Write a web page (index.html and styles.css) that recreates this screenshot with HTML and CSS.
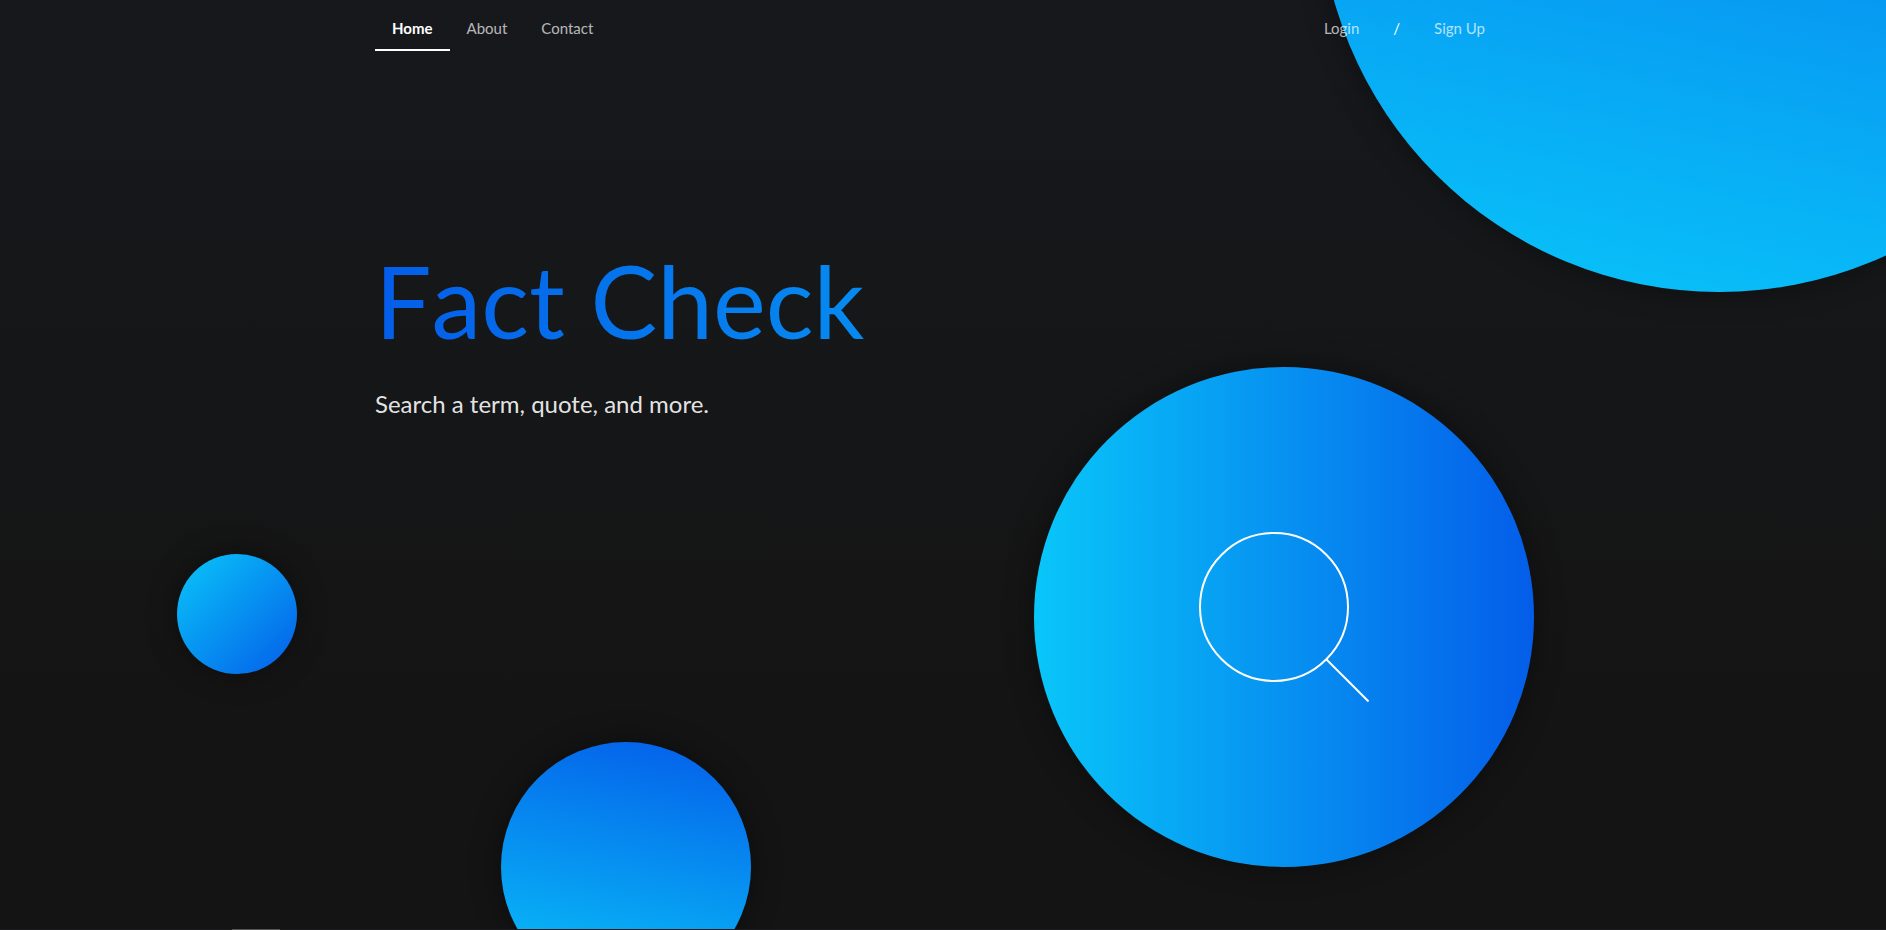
FILE: index.html
```html
<!DOCTYPE html>
<html lang="en">
<head>
  <meta charset="utf-8">
  <meta name="viewport" content="width=device-width, initial-scale=1">
  <title>Fact Check</title>
  <link rel="stylesheet" href="styles.css">
</head>
<body>
  <main class="hero">
    <div class="orb orb-corner"></div>
    <div class="orb orb-small"></div>
    <div class="orb orb-bottom"></div>
    <div class="container">
      <nav class="menu" aria-label="Main">
        <a class="item active" href="#home">Home</a>
        <a class="item" href="#about">About</a>
        <a class="item" href="#contact">Contact</a>
        <div class="menu-right">
          <a class="item" href="#login">Login</a>
          <span class="item divider">/</span>
          <a class="item" href="#signup">Sign Up</a>
        </div>
      </nav>
      <header class="intro">
        <h1 class="title">Fact Check</h1>
        <p class="tagline">Search a term, quote, and more.</p>
      </header>
    </div>
    <button class="orb orb-search" type="button" aria-label="Search">
      <svg class="search-icon" viewBox="0 0 170 170" aria-hidden="true">
        <circle cx="75" cy="75" r="74"/>
        <path d="M127.5 127.5L169.5 169.5"/>
      </svg>
    </button>
  </main>
  <footer class="next"><div class="next-mark"></div></footer>
</body>
</html>
```
FILE: styles.css
```css
* {
  box-sizing: border-box;
}

body {
  margin: 0;
  height: 100vh;
  overflow: hidden;
  display: flex;
  flex-direction: column;
  background: #1b1a1c;
  color: #ffffff;
  font-family: Lato, "Liberation Sans", sans-serif;
}

.hero {
  position: relative;
  flex: 1;
  overflow: hidden;
  padding-right: 9px;
  background: linear-gradient(#17181c, #161719 30%, #141414 80%);
}

.container {
  position: relative;
  max-width: 1127px;
  margin: 0 auto;
}

.menu {
  display: flex;
  align-items: flex-end;
}

.menu-right {
  display: flex;
  margin-left: auto;
}

.item {
  padding: 20px 17px 13px;
  border-bottom: 2px solid transparent;
  color: rgba(255, 255, 255, 0.7);
  font-size: 15px;
  line-height: 16px;
  text-decoration: none;
}

.item.active {
  border-color: #ffffff;
  color: #ffffff;
  font-weight: 700;
}

.item.divider {
  color: #ffffff;
}

.intro {
  padding-top: 189px;
}

.title {
  margin: 0;
  background: linear-gradient(90deg, #045de9, #09c6f9);
  background-clip: text;
  -webkit-background-clip: text;
  color: transparent;
  font-size: 100px;
  font-weight: 400;
  font-kerning: none;
  line-height: 120px;
}

.tagline {
  margin: 28px 0 0;
  color: rgba(255, 255, 255, 0.9);
  font-size: 24px;
  line-height: 32px;
}

/* Decorative circles floating behind the content */
.orb {
  position: absolute;
  border: 0;
  border-radius: 50%;
  box-shadow: 0 0 30px rgba(0, 0, 0, 0.4);
}

.orb-corner {
  top: -508px;
  right: -233px;
  width: 800px;
  height: 800px;
  background: linear-gradient(192deg, #045de9, #09c6f9);
}

.orb-small {
  top: 554px;
  left: 177px;
  width: 120px;
  height: 120px;
  background: linear-gradient(135deg, #09c6f9, #045de9);
}

.orb-bottom {
  top: 742px;
  left: 501px;
  width: 250px;
  height: 250px;
  background: linear-gradient(192deg, #045de9, #09c6f9);
}

.orb-search {
  top: 367px;
  right: 352px;
  width: 500px;
  height: 500px;
  padding: 0;
  display: grid;
  place-items: center;
  background: linear-gradient(90deg, #09c6f9, #045de9);
  cursor: pointer;
}

.search-icon {
  width: 170px;
  height: 170px;
  fill: none;
  stroke: #ffffff;
  stroke-width: 2;
}

.next {
  height: 1px;
  padding-left: 232px;
}

.next-mark {
  width: 48px;
  height: 1px;
  background: #555555;
}
```
